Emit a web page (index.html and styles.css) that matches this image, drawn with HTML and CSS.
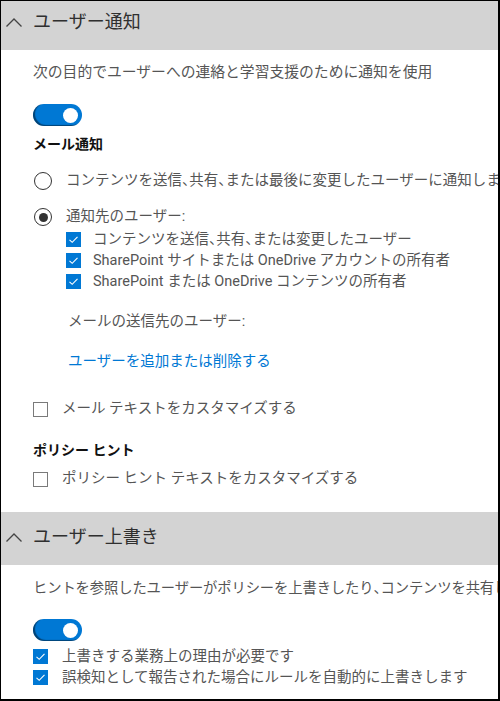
FILE: index.html
```html
<!DOCTYPE html>
<html lang="ja">
<head>
<meta charset="utf-8">
<link rel="stylesheet" href="styles.css">
</head>
<body>
<div class="frame">
  <div class="scroll">
    <div class="sec-head">
      <svg class="chev" width="16" height="9" viewBox="0 0 16 9"><path d="M0.5 8.5 L8 1 L15.5 8.5" fill="none" stroke="#444" stroke-width="1.3"/></svg>
      <span class="sec-title">ユーザー通知</span>
    </div>
    <div class="sec-body s1">
      <p class="desc">次の目的でユーザーへの連絡と学習支援のために通知を使用</p>
      <div class="toggle t1"><span class="knob"></span></div>
      <div class="label l1">メール通知</div>
      <div class="radio r1"><span class="rb"></span><span class="txt">コンテンツを送信<span class="p">、</span>共有<span class="p">、</span>または最後に変更したユーザーに通知します</span></div>
      <div class="radio r2"><span class="rb on"></span><span class="txt">通知先のユーザー:</span></div>
      <div class="checks nested">
        <div class="check"><span class="cb on"><svg width="15" height="15" viewBox="0 0 15 15"><path d="M3.5 7.8 L6.2 10.3 L11.5 4.8" fill="none" stroke="#fff" stroke-width="1.1"/></svg></span><span class="txt">コンテンツを送信<span class="p">、</span>共有<span class="p">、</span>または変更したユーザー</span></div>
        <div class="check"><span class="cb on"><svg width="15" height="15" viewBox="0 0 15 15"><path d="M3.5 7.8 L6.2 10.3 L11.5 4.8" fill="none" stroke="#fff" stroke-width="1.1"/></svg></span><span class="txt">SharePoint サイトまたは OneDrive アカウントの所有者</span></div>
        <div class="check"><span class="cb on"><svg width="15" height="15" viewBox="0 0 15 15"><path d="M3.5 7.8 L6.2 10.3 L11.5 4.8" fill="none" stroke="#fff" stroke-width="1.1"/></svg></span><span class="txt">SharePoint または OneDrive コンテンツの所有者</span></div>
      </div>
      <div class="sub sendto">メールの送信先のユーザー:</div>
      <a class="sub link">ユーザーを追加または削除する</a>
      <div class="check plain c-mail"><span class="cb"></span><span class="txt">メール テキストをカスタマイズする</span></div>
      <div class="label l2">ポリシー ヒント</div>
      <div class="check plain c-tip"><span class="cb"></span><span class="txt">ポリシー ヒント テキストをカスタマイズする</span></div>
    </div>
    <div class="sec-head h2">
      <svg class="chev" width="16" height="9" viewBox="0 0 16 9"><path d="M0.5 8.5 L8 1 L15.5 8.5" fill="none" stroke="#444" stroke-width="1.3"/></svg>
      <span class="sec-title">ユーザー上書き</span>
    </div>
    <div class="sec-body s2">
      <p class="desc d2">ヒントを参照したユーザーがポリシーを上書きしたり<span class="p">、</span>コンテンツを共有したりできるようにします</p>
      <div class="toggle t2"><span class="knob"></span></div>
      <div class="check plain c-o1"><span class="cb on"><svg width="15" height="15" viewBox="0 0 15 15"><path d="M3.5 7.8 L6.2 10.3 L11.5 4.8" fill="none" stroke="#fff" stroke-width="1.1"/></svg></span><span class="txt">上書きする業務上の理由が必要です</span></div>
      <div class="check plain c-o2"><span class="cb on"><svg width="15" height="15" viewBox="0 0 15 15"><path d="M3.5 7.8 L6.2 10.3 L11.5 4.8" fill="none" stroke="#fff" stroke-width="1.1"/></svg></span><span class="txt">誤検知として報告された場合にルールを自動的に上書きします</span></div>
    </div>
  </div>
</div>
</body>
</html>
```

FILE: styles.css
```css
html, body {
  margin: 0;
  padding: 0;
  background: #fff;
}
body {
  font-family: Roboto, "Noto Sans CJK JP", sans-serif;
  color: #555;
  font-size: 14.5px;
}
.frame {
  width: 500px;
  height: 701px;
  box-sizing: border-box;
  border: 1px solid #000;
  border-right-width: 2px;
  border-bottom-width: 2px;
  overflow: hidden;
}
.scroll {
  margin-top: -4px;
  display: flex;
  flex-direction: column;
}
.sec-head {
  height: 53px;
  box-sizing: border-box;
  padding: 0 0 3px 5px;
  background: #d3d3d3;
  display: flex;
  align-items: center;
  flex-shrink: 0;
}
.chev {
  display: block;
  margin-right: 11px;
}
.sec-title {
  font-size: 18px;
  color: #2f2f2f;
  line-height: 24px;
  white-space: nowrap;
}
.sec-body {
  display: flex;
  flex-direction: column;
  align-items: flex-start;
  padding-left: 32px;
  white-space: nowrap;
}
.p {
  font-feature-settings: "halt";
}
.desc {
  margin: 12px 0 0;
  line-height: 20px;
  font-size: 14.8px;
}
.toggle {
  width: 49px;
  height: 22px;
  border-radius: 11px;
  background: #0078d4;
  box-sizing: border-box;
  display: flex;
  align-items: center;
  justify-content: flex-end;
  padding-right: 4px;
  box-shadow: inset 2px -1px 1px rgba(0, 0, 0, 0.45);
  flex-shrink: 0;
}
.knob {
  width: 15px;
  height: 15px;
  border-radius: 50%;
  background: #fff;
}
.t1 { margin-top: 22px; }
.label {
  font-weight: bold;
  color: #111;
  font-size: 14px;
  line-height: 20px;
}
.l1 { margin-top: 8px; }
.radio {
  display: flex;
  align-items: center;
  line-height: 20px;
  margin-left: 1px;
}
.r1 { margin-top: 17px; }
.r2 { margin-top: 16px; }
.rb {
  width: 18px;
  height: 18px;
  box-sizing: border-box;
  border: 1.6px solid #333;
  border-radius: 50%;
  margin-right: 14px;
  display: flex;
  align-items: center;
  justify-content: center;
  flex-shrink: 0;
}
.rb.on::after {
  content: "";
  width: 9px;
  height: 9px;
  border-radius: 50%;
  background: #333;
}
.checks {
  display: flex;
  flex-direction: column;
  margin-top: 2px;
}
.nested { margin-left: 33px; }
.check {
  display: flex;
  align-items: center;
  line-height: 21px;
}
.cb {
  width: 15px;
  height: 15px;
  box-sizing: border-box;
  border: 1px solid #7a7a7a;
  margin-right: 12px;
  flex-shrink: 0;
  display: block;
}
.cb svg { display: block; margin: -1px; }
.cb.on {
  background: #0078d4;
  border-color: #0078d4;
}
.plain .cb { margin-right: 14px; }
.sub {
  margin-left: 35px;
  line-height: 20px;
}
.sendto { margin-top: 20px; }
.link {
  margin-top: 20px;
  color: #0078d4;
  cursor: pointer;
}
.c-mail { margin-top: 27px; line-height: 20px; }
.l2 { margin-top: 21px; }
.c-tip { margin-top: 9px; line-height: 20px; }
.h2 { margin-top: 23px; }
.d2 { margin-top: 13px; font-size: 14.3px; letter-spacing: -0.1px; }
.t2 { margin-top: 21px; }
.c-o1 { margin-top: 5px; line-height: 21px; }
.c-o2 { line-height: 21px; }
```
